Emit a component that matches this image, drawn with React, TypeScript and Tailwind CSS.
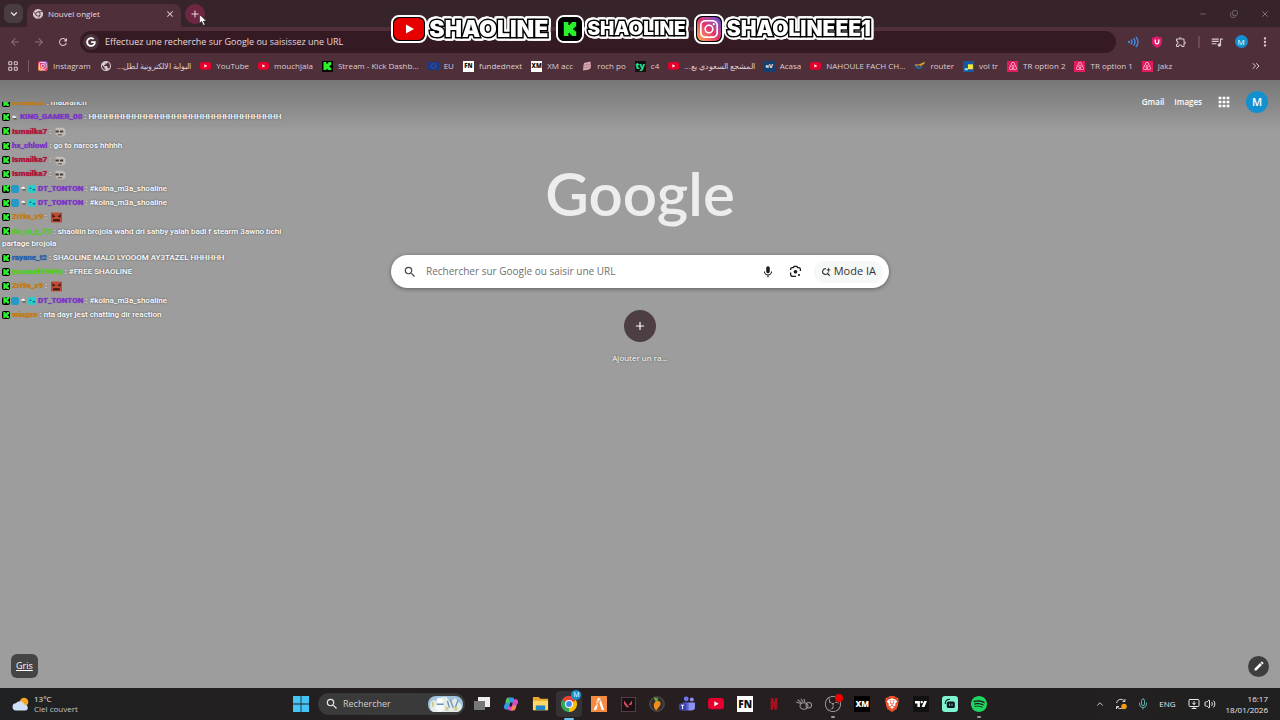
import type { ReactNode } from "react";
import { FaGoogle } from "react-icons/fa";
import {
  MdAdd,
  MdApps,
  MdArrowBack,
  MdArrowForward,
  MdClose,
  MdEdit,
  MdMic,
  MdMoreVert,
  MdOutlineExtension,
  MdPublic,
  MdQueueMusic,
  MdRefresh,
  MdSearch,
} from "react-icons/md";
import { SiAirbnb, SiBrave, SiFivem, SiInstagram, SiKick, SiNetflix, SiObsstudio, SiSpotify, SiTradingview, SiValorant } from "react-icons/si";
import { ChevronDown, ChevronUp, ChevronsRight, Copy, Mic, Minus, MonitorDown, Volume2, X } from "lucide-react";

/* ---------- small shared icons ---------- */

function YouTubeIcon({ className }: { className?: string }) {
  return (
    <svg viewBox="0 0 24 17" className={className}>
      <rect width="24" height="17" rx="4.5" fill="#e6002d" />
      <path d="M9.5 4.8v7.4l6.5-3.7z" fill="#fff" />
    </svg>
  );
}

function KickIcon({ className = "size-2.5", glyph = "size-4/5" }: { className?: string; glyph?: string }) {
  return (
    <span className={`${className} inline-flex shrink-0 items-center justify-center bg-black text-[#2bf02b]`}>
      <SiKick className={glyph} />
    </span>
  );
}

function InstagramIcon({ className }: { className?: string }) {
  return (
    <span
      className={`${className} inline-flex shrink-0 items-center justify-center bg-linear-to-tr from-[#fcb045] via-[#e1306c] to-[#5b3fd6] text-white`}
    >
      <SiInstagram className="size-3/4" />
    </span>
  );
}

function ChromeIcon({ className, mono }: { className?: string; mono?: boolean }) {
  const c = mono ? ["#d9c9ce", "#d9c9ce", "#d9c9ce", "#d9c9ce"] : ["#ea4335", "#34a853", "#fbbc05", "#4285f4"];
  return (
    <svg viewBox="0 0 24 24" className={className}>
      <path d="M12 12 1.6 6A12 12 0 0 1 22.4 6z" fill={c[0]} />
      <path d="M12 12v12A12 12 0 0 1 1.6 6z" fill={c[1]} />
      <path d="M12 12 22.4 6A12 12 0 0 1 12 24z" fill={c[2]} />
      <circle cx="12" cy="12" r="6" fill={mono ? "#4f2f3a" : "#fff"} />
      <circle cx="12" cy="12" r="4.4" fill={c[3]} />
      {mono && <path d="M12 6h10.4M7 15 1.6 6M17 15l-5 9" stroke="#4f2f3a" strokeWidth="1.6" />}
    </svg>
  );
}

function AirbnbIcon() {
  return (
    <span className="flex size-[11px] items-center justify-center bg-[#e31c5f] text-white">
      <SiAirbnb className="size-2" />
    </span>
  );
}

function LensIcon({ className }: { className?: string }) {
  return (
    <svg viewBox="0 0 24 24" className={className} fill="none" stroke="currentColor" strokeWidth="2.4">
      <path d="M3 9V8a3 3 0 0 1 3-3h2l1.5-2.500h5L16 5h2a3 3 0 0 1 3 3v3M3 14v3a4 4 0 0 0 4 4h6" />
      <circle cx="12" cy="12.5" r="3.4" fill="currentColor" stroke="none" />
      <circle cx="18.5" cy="18.5" r="2" fill="currentColor" stroke="none" />
    </svg>
  );
}

function SparkSearchIcon({ className }: { className?: string }) {
  return (
    <svg viewBox="0 0 24 24" className={className} fill="none" stroke="currentColor" strokeWidth="2.6">
      <path d="M12 4a7 7 0 1 0 5.5 9M15 15l6 6" />
      <path d="M18 1l1.500 4.500L24 7l-4.500 1.500L18 13l-1.500-4.500L12 7l4.500-1.500z" fill="currentColor" stroke="none" />
    </svg>
  );
}

/* ---------- browser chrome ---------- */

function TabStrip() {
  return (
    <div className="flex h-[27px] items-center bg-[#37242a] text-[#e9dce0]">
      <button aria-label="Rechercher dans les onglets" className="ml-1 flex size-[19px] items-center justify-center rounded-md bg-[#4a3d41]">
        <ChevronDown className="size-2.5" strokeWidth={3} />
      </button>
      <div className="ml-1 flex h-[23px] w-[154px] items-center self-end rounded-t-lg bg-[#4f2f3a] px-1.5 pb-1">
        <ChromeIcon mono className="size-2.5" />
        <span className="ml-[5px] flex-1 text-[8px]">Nouvel onglet</span>
        <button aria-label="Fermer">
          <MdClose className="size-2.5" />
        </button>
      </div>
      <button aria-label="Ouvrir un nouvel onglet" className="ml-1 flex size-5 items-center justify-center rounded-full bg-[#6e2742]">
        <MdAdd className="size-3" />
      </button>
      <div className="ml-auto flex items-center text-[#8d7d82]">
        <button aria-label="Réduire" className="flex w-[31px] justify-center">
          <Minus className="size-2" />
        </button>
        <button aria-label="Restaurer" className="flex w-[31px] justify-center">
          <Copy className="size-2 -scale-y-100" />
        </button>
        <button aria-label="Fermer la fenêtre" className="flex w-[31px] justify-center">
          <X className="size-2.5" />
        </button>
      </div>
    </div>
  );
}

function ToolButton({ label, children }: { label: string; children: ReactNode }) {
  return (
    <button aria-label={label} className="flex size-6 shrink-0 items-center justify-center">
      {children}
    </button>
  );
}

function Toolbar() {
  return (
    <div className="flex h-[27px] items-center px-[3px] pt-0.5 text-[#d9c9ce]">
      <ToolButton label="Retour">
        <MdArrowBack className="size-3 text-[#8a707a]" />
      </ToolButton>
      <ToolButton label="Avancer">
        <MdArrowForward className="size-3 text-[#8a707a]" />
      </ToolButton>
      <ToolButton label="Actualiser">
        <MdRefresh className="size-3" />
      </ToolButton>
      <div className="mx-[5px] flex h-[22px] flex-1 items-center rounded-full bg-[#351a23] pl-[3px]">
        <span className="flex size-4 items-center justify-center rounded-full bg-[#4a323b] text-white">
          <FaGoogle className="size-2.5" />
        </span>
        <input
          aria-label="Barre d'adresse"
          placeholder="Effectuez une recherche sur Google ou saisissez une URL"
          className="ml-1.5 flex-1 bg-transparent text-[9px] outline-none placeholder:text-[#e6d9dd]"
        />
      </div>
      <ToolButton label="Lecture à voix haute">
        <svg viewBox="0 0 24 24" className="size-3 text-[#3f86d8]" fill="none" stroke="currentColor" strokeWidth="3">
          <circle cx="4" cy="12" r="2.5" fill="currentColor" stroke="none" />
          <path d="M8 7q4 5 0 10M13 4.500q6 7.500 0 15M18 2q8 10 0 20" />
        </svg>
      </ToolButton>
      <ToolButton label="Bloqueur">
        <svg viewBox="0 0 24 24" className="size-3">
          <path d="M12 0c3 2 6 3 10 3v9c0 6-4 9-10 12C6 21 2 18 2 12V3c4 0 7-1 10-3z" fill="#e01b6b" />
          <path d="M8.500 7v5a3.500 3.500 0 0 0 7 0V7" fill="none" stroke="#fff" strokeWidth="2.5" />
        </svg>
      </ToolButton>
      <ToolButton label="Extensions">
        <MdOutlineExtension className="size-3" />
      </ToolButton>
      <span className="mx-[5px] h-3 w-0.5 bg-[#6a4a55]" />
      <ToolButton label="Médias">
        <MdQueueMusic className="size-3.5" />
      </ToolButton>
      <ToolButton label="Profil">
        <span className="flex size-[13px] items-center justify-center rounded-full bg-[#1390cf] text-[8px] text-white">M</span>
      </ToolButton>
      <ToolButton label="Menu">
        <MdMoreVert className="size-3.5" />
      </ToolButton>
    </div>
  );
}

const bookmarks: { label: string; icon: ReactNode; rtl?: boolean }[] = [
  { label: "Instagram", icon: <InstagramIcon className="size-2.5 rounded-xs" /> },
  { label: "البوابة الالكترونية لطل...", icon: <MdPublic className="size-3 text-[#d5ccd0]" />, rtl: true },
  { label: "YouTube", icon: <YouTubeIcon className="w-[11px]" /> },
  { label: "mouchjala", icon: <YouTubeIcon className="w-[11px]" /> },
  { label: "Stream - Kick Dashb...", icon: <KickIcon className="size-[11px]" /> },
  {
    label: "EU",
    icon: (
      <svg viewBox="0 0 22 16" className="w-[11px]">
        <rect width="22" height="16" fill="#173a8c" />
        <circle cx="11" cy="8" r="4.5" fill="none" stroke="#8f9350" strokeWidth="1.5" strokeDasharray="1.5 2" />
      </svg>
    ),
  },
  { label: "fundednext", icon: <span className="flex size-[11px] items-center justify-center bg-white text-[6px] font-extrabold text-[#111]">FN</span> },
  { label: "XM acc", icon: <span className="flex size-[11px] items-center justify-center bg-white text-[6px] font-extrabold text-[#111]">XM</span> },
  {
    label: "roch po",
    icon: (
      <svg viewBox="0 0 20 20" className="size-2.5">
        <path d="M4 4 17 1l1 12-4 4-12 2 1-10z" fill="#d9aab2" />
        <path d="M3 9 17 6M3 14l14-3" stroke="#a77480" strokeWidth="1.5" />
      </svg>
    ),
  },
  { label: "c4", icon: <span className="flex size-[11px] items-center justify-center bg-[#111] text-[9px] font-extrabold text-[#22e08a]">ty</span> },
  { label: "المشجع السعودي يع...", icon: <YouTubeIcon className="w-[11px]" />, rtl: true },
  { label: "Acasa", icon: <span className="flex size-[11px] items-center justify-center bg-[#143f70] text-[6px] font-bold text-white">eV</span> },
  { label: "NAHOULE FACH CH...", icon: <YouTubeIcon className="w-[11px]" /> },
  {
    label: "router",
    icon: (
      <svg viewBox="0 0 22 16" className="w-[11px]" fill="none">
        <path d="M1 4c0 12 14 13 18 4-6 4-12 2-18-4z" fill="#2465a8" />
        <path d="M2 6h8l11-5M12 8l9-6" stroke="#e7b72c" strokeWidth="2" />
      </svg>
    ),
  },
  {
    label: "vol tr",
    icon: (
      <svg viewBox="0 0 20 20" className="size-[11px]">
        <rect width="20" height="20" fill="#1558a0" />
        <path d="M9 6h9v9H9z" fill="#f7ea38" />
        <path d="M3 13h6v4H3z" fill="#93d2e8" />
      </svg>
    ),
  },
  { label: "TR option 2", icon: <AirbnbIcon /> },
  { label: "TR option 1", icon: <AirbnbIcon /> },
  { label: "jakz", icon: <AirbnbIcon /> },
];

function BookmarksBar() {
  return (
    <nav className="flex h-[26px] items-center pr-[18px] pb-0.5 pl-2 text-[8px] whitespace-nowrap text-[#dccdd2]">
      <button aria-label="Applications">
        <svg viewBox="0 0 20 20" className="size-2.5" fill="none" stroke="currentColor" strokeWidth="2">
          <path d="M1.500 1.500h6v6h-6zM12.500 1.500h6v6h-6zM1.500 12.500h6v6h-6zM12.500 12.500h6v6h-6z" />
        </svg>
      </button>
      <span className="mr-[9px] ml-2.5 h-3 w-px bg-[#7a5a65]" />
      <ul className="flex items-center gap-[9px]">
        {bookmarks.map((b) => (
          <li key={b.label}>
            <a href="#" className="flex items-center gap-[5px]">
              {b.icon}
              <span dir={b.rtl ? "rtl" : undefined}>{b.label}</span>
            </a>
          </li>
        ))}
      </ul>
      <button aria-label="Autres favoris" className="ml-auto">
        <ChevronsRight className="size-3" />
      </button>
    </nav>
  );
}

/* ---------- stream overlays ---------- */

// black outline from the stroke, white halo from stacked drop shadows
function Handle({ size, children }: { size: string; children: string }) {
  return (
    <span
      className={`${size} leading-7 font-black text-white [-webkit-text-stroke:3px_#000] [paint-order:stroke_fill] [filter:drop-shadow(1px_0_#fff)_drop-shadow(-1px_0_#fff)_drop-shadow(0_1px_#fff)_drop-shadow(0_-1px_#fff)_drop-shadow(1px_1px_#fff)_drop-shadow(-1px_-1px_#fff)]`}
    >
      {children}
    </span>
  );
}

function SocialOverlay() {
  return (
    <div className="pointer-events-none absolute inset-x-0 top-[13px] flex h-8 items-center justify-center gap-2 pr-[18px] font-[Inter]">
      <div className="flex items-center gap-0.5">
        <span className="flex h-7 w-9 items-center justify-center rounded-lg border-2 border-white bg-black p-px">
          <span className="flex size-full items-center justify-center rounded-md bg-[#e80000]">
            <svg viewBox="0 0 10 10" className="size-2.5">
              <path d="M2 0.500v9l8-4.500z" fill="#fff" />
            </svg>
          </span>
        </span>
        <Handle size="text-[23px]">SHAOLINE</Handle>
      </div>
      <div className="flex items-center gap-[3px]">
        <span className="flex rounded-lg border-2 border-white">
          <KickIcon className="size-6 rounded-md" glyph="size-3.5" />
        </span>
        <Handle size="text-[19px]">SHAOLINE</Handle>
      </div>
      <div className="flex items-center gap-[3px]">
        <span className="flex rounded-lg border-2 border-white bg-black p-px">
          <InstagramIcon className="size-6 rounded-md" />
        </span>
        <Handle size="text-[21px]">SHAOLINEEE1</Handle>
      </div>
    </div>
  );
}

type Message = { user: string; color: string; text?: string; emote?: "grey" | "red"; badges?: "one" | "three" };

const messages: Message[] = [
  { user: "aimeinbz", color: "text-[#c47a10]", text: "mabranch" },
  { user: "KING_GAMER_00", color: "text-[#7a35c4]", text: "HHHHHHHHHHHHHHHHHHHHHHHHHHHHHHHHHH", badges: "one" },
  { user: "Ismailka7", color: "text-[#ad1338]", emote: "grey" },
  { user: "hx_chlowl", color: "text-[#7a35c4]", text: "go to narcos hhhhh" },
  { user: "Ismailka7", color: "text-[#ad1338]", emote: "grey" },
  { user: "Ismailka7", color: "text-[#ad1338]", emote: "grey" },
  { user: "DT_TONTON", color: "text-[#7a35c4]", text: "#kolna_m3a_shoaline", badges: "three" },
  { user: "DT_TONTON", color: "text-[#7a35c4]", text: "#kolna_m3a_shoaline", badges: "three" },
  { user: "Zri9a_x9", color: "text-[#c47a10]", emote: "red" },
  { user: "do_ni_x_77", color: "text-[#4fd01c]", text: "shaoliin brojola wahd dri sahby yalah badl f stearm 3awno bchi partage brojola" },
  { user: "rayane_t2", color: "text-[#2360b0]", text: "SHAOLINE MALO LYOOOM AY3TAZEL HHHHHH" },
  { user: "youssef1949y", color: "text-[#4fd01c]", text: "#FREE SHAOLINE" },
  { user: "Zri9a_x9", color: "text-[#c47a10]", emote: "red" },
  { user: "DT_TONTON", color: "text-[#7a35c4]", text: "#kolna_m3a_shoaline", badges: "three" },
  { user: "wiugzo", color: "text-[#c47a10]", text: "nta dayr jest chatting dir reaction" },
];

function Emote({ kind }: { kind: "grey" | "red" }) {
  return (
    <svg viewBox="0 0 20 20" className="ml-0.5 inline-block size-[11px]">
      {kind === "grey" ? (
        <>
          <path d="M1 3h13l5 4v9l-5 3H5l-4-5z" fill="#c4bcb6" />
          <path d="M1 8h6v4H1zM9 8h6v4H9z" fill="#433f3d" />
          <path d="M5 16h8" stroke="#5b5553" strokeWidth="2" />
        </>
      ) : (
        <>
          <path d="M0 1h20v18H0z" fill="#b94a33" />
          <path d="M2 4l6 4-5 2zM18 4l-6 4 5 2zM4 13h12v4H4z" fill="#3c1411" />
        </>
      )}
    </svg>
  );
}

function Badges({ kind }: { kind?: "one" | "three" }) {
  const arrow = (
    <svg viewBox="0 0 10 10" className="size-[7px]">
      <path d="M1 4l4-2 3 3-4 1z" fill="#eee" />
      <path d="M3 6h5v2H4z" fill="#555" />
    </svg>
  );
  return (
    <span className="mr-0.5 inline-flex items-center gap-px align-middle">
      <KickIcon className="size-2 rounded-xs" />
      {kind === "three" && <span className="size-2 rounded-xs bg-[#2799c6]" />}
      {kind && arrow}
      {kind === "three" && (
        <svg viewBox="0 0 10 10" className="size-2">
          <rect width="10" height="10" rx="3" fill="#25cfd0" />
          <path d="M2 3h2v2H2zM6 5h3v2H6z" fill="#0d6f7c" />
        </svg>
      )}
    </span>
  );
}

function ChatOverlay() {
  return (
    <div className="pointer-events-none absolute top-[102px] left-0 flex h-[219px] w-[290px] flex-col justify-end overflow-hidden">
      <ul className="flex h-[224px] shrink-0 flex-col justify-between px-0.5 font-[Roboto] text-[8px] leading-3 font-medium text-white [text-shadow:0_0_2px_#444]">
        {messages.map((m, i) => (
          <li key={i}>
            <Badges kind={m.badges} />
            <span className={`${m.color} font-bold [text-shadow:0_0_1px_currentColor]`}>{m.user}</span>
            <span> : </span>
            {m.text}
            {m.emote && <Emote kind={m.emote} />}
          </li>
        ))}
      </ul>
    </div>
  );
}

/* ---------- new tab page ---------- */

function NewTabPage() {
  return (
    <main className="relative flex flex-1 flex-col items-center bg-[#9d9d9d] bg-linear-to-b from-[#777777] to-[#9d9d9d] to-[52px]">
      <div className="flex w-full items-center justify-end gap-2.5 pt-[11px] pr-3 text-[8px] font-semibold text-white">
        <a href="#">Gmail</a>
        <a href="#">Images</a>
        <button aria-label="Applications Google" className="mx-1">
          <MdApps className="size-4" />
        </button>
        <button aria-label="Compte Google" className="flex size-[22px] items-center justify-center rounded-full bg-[#1390cf] text-[11px]">
          M
        </button>
      </div>
      <h1 className="mt-11 font-[Lato] text-[60px] leading-[72px] font-semibold text-[#ededed]">Google</h1>
      <form className="mt-[26px] flex h-[33px] w-[498px] max-w-full items-center rounded-full bg-white pr-1.5 pl-3 shadow-[0_1px_4px_rgba(0,0,0,0.4)]">
        <MdSearch className="size-3.5 text-[#444]" />
        <input
          aria-label="Rechercher"
          placeholder="Rechercher sur Google ou saisir une URL"
          className="ml-[9px] flex-1 bg-transparent text-[10px] outline-none placeholder:text-[#6f6f6f]"
        />
        <button type="button" aria-label="Recherche vocale">
          <MdMic className="size-3.5 text-[#1c1c1c]" />
        </button>
        <button type="button" aria-label="Recherche par image" className="mr-3 ml-3.5">
          <LensIcon className="size-[13px] text-[#1c1c1c]" />
        </button>
        <button type="button" className="flex h-[22px] items-center gap-[3px] rounded-full bg-[#f6f7f7] px-[7px] text-[11px] text-[#333]">
          <SparkSearchIcon className="size-2.5" />
          Mode IA
        </button>
      </form>
      <button className="mt-[22px] flex w-16 flex-col items-center gap-2.5 text-[8px] leading-3 text-white [text-shadow:0_0_2px_#444]">
        <span className="flex size-8 items-center justify-center rounded-full bg-[#4d3e43]">
          <MdAdd className="size-3.5" />
        </span>
        Ajouter un ra...
      </button>
      <div className="mt-auto flex w-full items-center justify-between px-[11px] pb-2.5">
        <a href="#" className="flex h-6 items-center rounded-md bg-[#454545] px-[5px] text-[9px] text-white underline">
          Gris
        </a>
        <button aria-label="Personnaliser Chrome" className="flex size-[21px] items-center justify-center rounded-full bg-[#3e3e3e] text-white">
          <MdEdit className="size-3" />
        </button>
      </div>
    </main>
  );
}

/* ---------- taskbar ---------- */

const pinned: { name: string; icon: ReactNode; active?: boolean; running?: boolean }[] = [
  {
    name: "Vue des tâches",
    icon: (
      <svg viewBox="0 0 16 16" className="size-4">
        <path d="M4 1h12v10H4z" fill="#eee" />
        <path d="M0 5h11v9H0z" fill="#777" />
      </svg>
    ),
  },
  {
    name: "Copilot",
    icon: (
      <svg viewBox="0 0 20 20" className="size-4">
        <path d="M7 2h6l2 6H9l-2 9H4c-3 0-3-3-2.500-5z" fill="#2f9be8" />
        <path d="M7 2c-3 0-3 3-4 6l5 1z" fill="#52c46a" />
        <path d="M13 18H7l-2-5h6l2-9h3c3 0 3 3 2.500 5z" fill="#d64fc2" />
        <path d="M13 18c3 0 3-3 4-6h-5l-2 6z" fill="#f08a4b" />
      </svg>
    ),
  },
  {
    name: "Explorateur",
    icon: (
      <svg viewBox="0 0 18 16" className="w-[17px]">
        <path d="M1 1h6l2 2h8v12H1z" fill="#e8a92a" />
        <path d="M1 5h16v10H1z" fill="#ffd968" />
        <path d="M4 10h10v5H4z" fill="#2088c8" />
      </svg>
    ),
  },
  {
    name: "Chrome",
    active: true,
    icon: (
      <span className="relative">
        <ChromeIcon className="size-4" />
        <span className="absolute -top-1.5 -right-1 flex size-2.5 items-center justify-center rounded-full bg-[#1390cf] text-[7px] text-white">M</span>
      </span>
    ),
  },
  { name: "FiveM", icon: <span className="flex size-4 items-center justify-center bg-[#f58a42] text-white"><SiFivem className="size-3" /></span> },
  { name: "Valorant", icon: <span className="flex size-[15px] items-center justify-center border border-[#5a3a44] bg-[#191114] text-[#d84a62]"><SiValorant className="size-2" /></span> },
  {
    name: "FL Studio",
    icon: (
      <svg viewBox="0 0 20 20" className="size-4">
        <circle cx="10" cy="10" r="9" fill="#35302e" stroke="#666" />
        <path d="M9 6c5-1 7 3 4 7l-4 5c-3-2-5-8 0-12z" fill="#f28a1e" />
        <path d="M9 7c-2-2-3-3-2-6 1 2 3 2 4 1 0 2 0 3-1 5z" fill="#6cb53a" />
      </svg>
    ),
  },
  {
    name: "Teams",
    icon: (
      <svg viewBox="0 0 20 20" className="size-4">
        <circle cx="9" cy="3.5" r="3" fill="#6f78e8" />
        <circle cx="16" cy="4.5" r="2.5" fill="#8b92f0" />
        <path d="M5 8h8v10H5z" fill="#5b62d6" />
        <path d="M12 8h8v6q0 4-5 4h-3z" fill="#8b92f0" />
        <rect y="9" width="9" height="9" rx="2" fill="#3940a8" />
        <path d="M2.500 11.500h4M4.500 11.500v5" stroke="#fff" strokeWidth="1.2" />
      </svg>
    ),
  },
  { name: "YouTube", icon: <YouTubeIcon className="w-4" /> },
  { name: "FundedNext", icon: <span className="flex size-4 items-center justify-center bg-white text-[10px] font-extrabold text-[#111]">FN</span> },
  { name: "Netflix", icon: <SiNetflix className="size-3 text-[#b01020]" /> },
  {
    name: "Nuage",
    icon: (
      <svg viewBox="0 0 20 16" className="w-4" fill="none" stroke="#9a9a9a" strokeWidth="1.3">
        <ellipse cx="10" cy="10" rx="5" ry="4" />
        <circle cx="16" cy="9" r="3.5" />
        <path d="M6 7 0 5M7 6 2 2M9 5 6 1M11 5l-1-4" />
      </svg>
    ),
  },
  {
    name: "OBS Studio",
    running: true,
    icon: (
      <span className="relative">
        <SiObsstudio className="size-4 text-[#b9b9b9]" />
        <span className="absolute -top-0.5 -right-0.5 size-2 rounded-full bg-[#f00000]" />
      </span>
    ),
  },
  { name: "XM", icon: <span className="flex size-4 items-center justify-center bg-black text-[8px] font-extrabold text-white">XM</span> },
  {
    name: "Brave",
    icon: (
      <span className="flex bg-[radial-gradient(circle,#fff_50%,transparent_51%)]">
        <SiBrave className="size-4 text-[#f0502a]" />
      </span>
    ),
  },
  { name: "TradingView", icon: <span className="flex size-4 items-center justify-center bg-[#111] text-white"><SiTradingview className="size-3" /></span> },
  {
    name: "Streamlabs",
    icon: (
      <svg viewBox="0 0 20 20" className="size-4">
        <rect width="20" height="20" rx="4" fill="#80f5d2" />
        <rect x="6" y="7" width="10" height="8" rx="2" fill="#09161d" />
        <path d="M4 10q0-6 6-6" stroke="#09161d" strokeWidth="1.3" fill="none" />
        <path d="M9.500 9.500v3M12.500 9.500v3" stroke="#80f5d2" />
      </svg>
    ),
  },
  { name: "Spotify", running: true, icon: <SiSpotify className="size-4 text-[#1ed760]" /> },
];

function Taskbar() {
  return (
    <footer className="flex h-8 items-center bg-linear-to-r from-[#202122] via-[#271e20] to-[#202020] text-[8px] text-[#e8e8e8]">
      <div className="flex flex-1 items-center gap-[5px] pl-3 leading-[10px]">
        <svg viewBox="0 0 24 20" className="w-[17px]">
          <circle cx="17" cy="7" r="6" fill="#f5a524" />
          <path d="M6 19a5 5 0 0 1-.5-10 7 7 0 0 1 12.500 2 4 4 0 0 1 .5 8z" fill="#cfe0f8" />
        </svg>
        <div>
          <p>13°C</p>
          <p className="text-[#c4c4c4]">Ciel couvert</p>
        </div>
      </div>
      <div className="flex items-center">
        <button aria-label="Démarrer" className="flex w-8 justify-center pr-0.5">
          <svg viewBox="0 0 16 16" className="size-4">
            <path d="M0 0h7.600v7.600H0zM8.400 0H16v7.600H8.400zM0 8.400h7.600V16H0zM8.400 8.400H16V16H8.400z" fill="#45c4f8" />
          </svg>
        </button>
        <label className="flex h-[22px] w-[147px] items-center rounded-full bg-[#3a3a3b] pr-0.5 pl-[7px]">
          <MdSearch className="size-3.5 shrink-0" />
          <input placeholder="Rechercher" aria-label="Rechercher dans Windows" className="ml-1 w-0 flex-1 bg-transparent text-[9px] outline-none placeholder:text-[#cfcfcf]" />
          <svg viewBox="0 0 36 17" className="w-[35px]">
            <rect width="36" height="17" rx="8" fill="#9fc4dc" />
            <path d="M2 11Q2 4 7 4l5 6 2-9h5l4 5 5-4 7 8q-1 6-7 7H9q-6 0-7-6z" fill="#e3ebe6" />
            <circle cx="12" cy="5" r="3.2" fill="#fff" />
            <circle cx="12" cy="12" r="4.6" fill="#f6f9fa" />
            <path d="M9 8.500h7M20 5l2 7M23 4l3 8M31 4l-3 8" stroke="#6d93b8" strokeWidth="1.4" />
            <path d="M18 11h3v4h-3zM27 11h3v4h-3zM4 6h2v5H4z" fill="#d8c98f" />
          </svg>
        </label>
        <div className="ml-0.5 flex w-[527px]">
          {pinned.map((app) => (
            <button key={app.name} aria-label={app.name} className="relative flex h-8 flex-1 items-center justify-center">
              <span className={app.active ? "flex size-[26px] items-center justify-center rounded-sm bg-[#353236]" : "flex"}>{app.icon}</span>
              {app.active && <span className="absolute bottom-0 h-0.5 w-2.5 rounded-full bg-[#69c3ef]" />}
              {app.running && <span className="absolute bottom-0.5 h-0.5 w-1 rounded-full bg-[#999]" />}
            </button>
          ))}
        </div>
      </div>
      <div className="flex flex-1 items-center justify-end pr-3">
        <button aria-label="Icônes cachées" className="mr-2.5">
          <ChevronUp className="size-2.5" />
        </button>
        <svg viewBox="0 0 24 24" className="mr-2.5 size-3" fill="none" stroke="#d5d5d5" strokeWidth="2">
          <path d="M3 10a9 9 0 0 1 16-4M20 2v5h-5M20 13a9 9 0 0 1-16 5M3 22v-5h5" />
          <circle cx="18" cy="17" r="5.5" fill="#f59a12" stroke="none" />
        </svg>
        <Mic className="mr-2.5 size-3 text-[#5fb0a8]" />
        <span className="mr-3">ENG</span>
        <MonitorDown className="mr-1 size-3" />
        <Volume2 className="mr-2.5 size-3" />
        <div className="text-right leading-[11px]">
          <p>16:17</p>
          <p>18/01/2026</p>
        </div>
      </div>
    </footer>
  );
}

export default function App() {
  return (
    <div className="relative flex min-h-screen flex-col overflow-hidden font-['Open_Sans',sans-serif]">
      <header className="bg-[#4f2f3a]">
        <TabStrip />
        <Toolbar />
        <BookmarksBar />
      </header>
      <NewTabPage />
      <Taskbar />
      <SocialOverlay />
      <ChatOverlay />
      {/* mouse pointer */}
      <svg viewBox="0 0 12 18" className="pointer-events-none absolute top-3.5 left-[199px] w-2">
        <path d="M1 1v13l3-3 2.500 6 2.500-1-2.500-5.500H11z" fill="#fff" stroke="#222" strokeWidth="0.8" />
      </svg>
    </div>
  );
}
